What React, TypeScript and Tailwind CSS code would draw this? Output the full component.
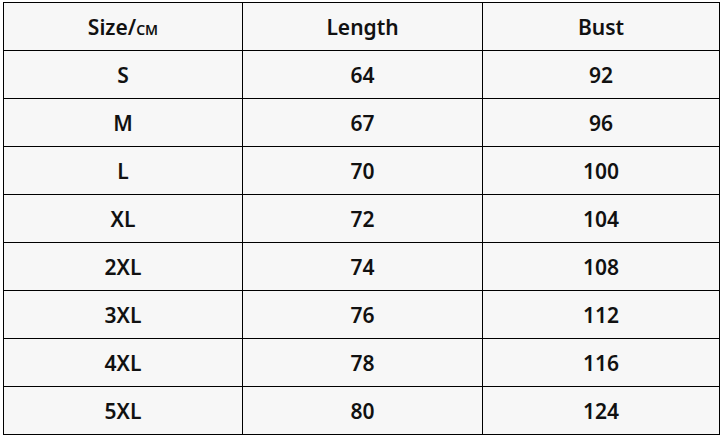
import React from "react";

const rows: [string, string, string][] = [
  ["S", "64", "92"],
  ["M", "67", "96"],
  ["L", "70", "100"],
  ["XL", "72", "104"],
  ["2XL", "74", "108"],
  ["3XL", "76", "112"],
  ["4XL", "78", "116"],
  ["5XL", "80", "124"],
];

export default function App() {
  return (
    <div className="w-[722px] h-[436px] bg-white pt-[2px] pl-[3px]" style={{ fontFamily: '"Noto Sans", "Noto Sans CJK SC", sans-serif' }}>
      <table className="border-collapse bg-[#f7f7f7] text-[#111] text-[21px] font-semibold">
        <colgroup>
          <col className="w-[239px]" />
          <col className="w-[240px]" />
          <col className="w-[237px]" />
        </colgroup>
        <tbody>
          <tr className="h-[48px]">
            <td className="border-[1.5px] border-black text-center p-0 pt-[2px] leading-none">
              Size/<span className="text-[14px]">CM</span>
            </td>
            <td className="border-[1.5px] border-black text-center p-0 pt-[2px] leading-none">Length</td>
            <td className="border-[1.5px] border-black text-center p-0 pt-[2px] leading-none">Bust</td>
          </tr>
          {rows.map((r) => (
            <tr key={r[0]} className="h-[48px]">
              {r.map((c, i) => (
                <td key={i} className="border-[1.5px] border-black text-center p-0 pt-[2px] leading-none">
                  {c}
                </td>
              ))}
            </tr>
          ))}
        </tbody>
      </table>
    </div>
  );
}
